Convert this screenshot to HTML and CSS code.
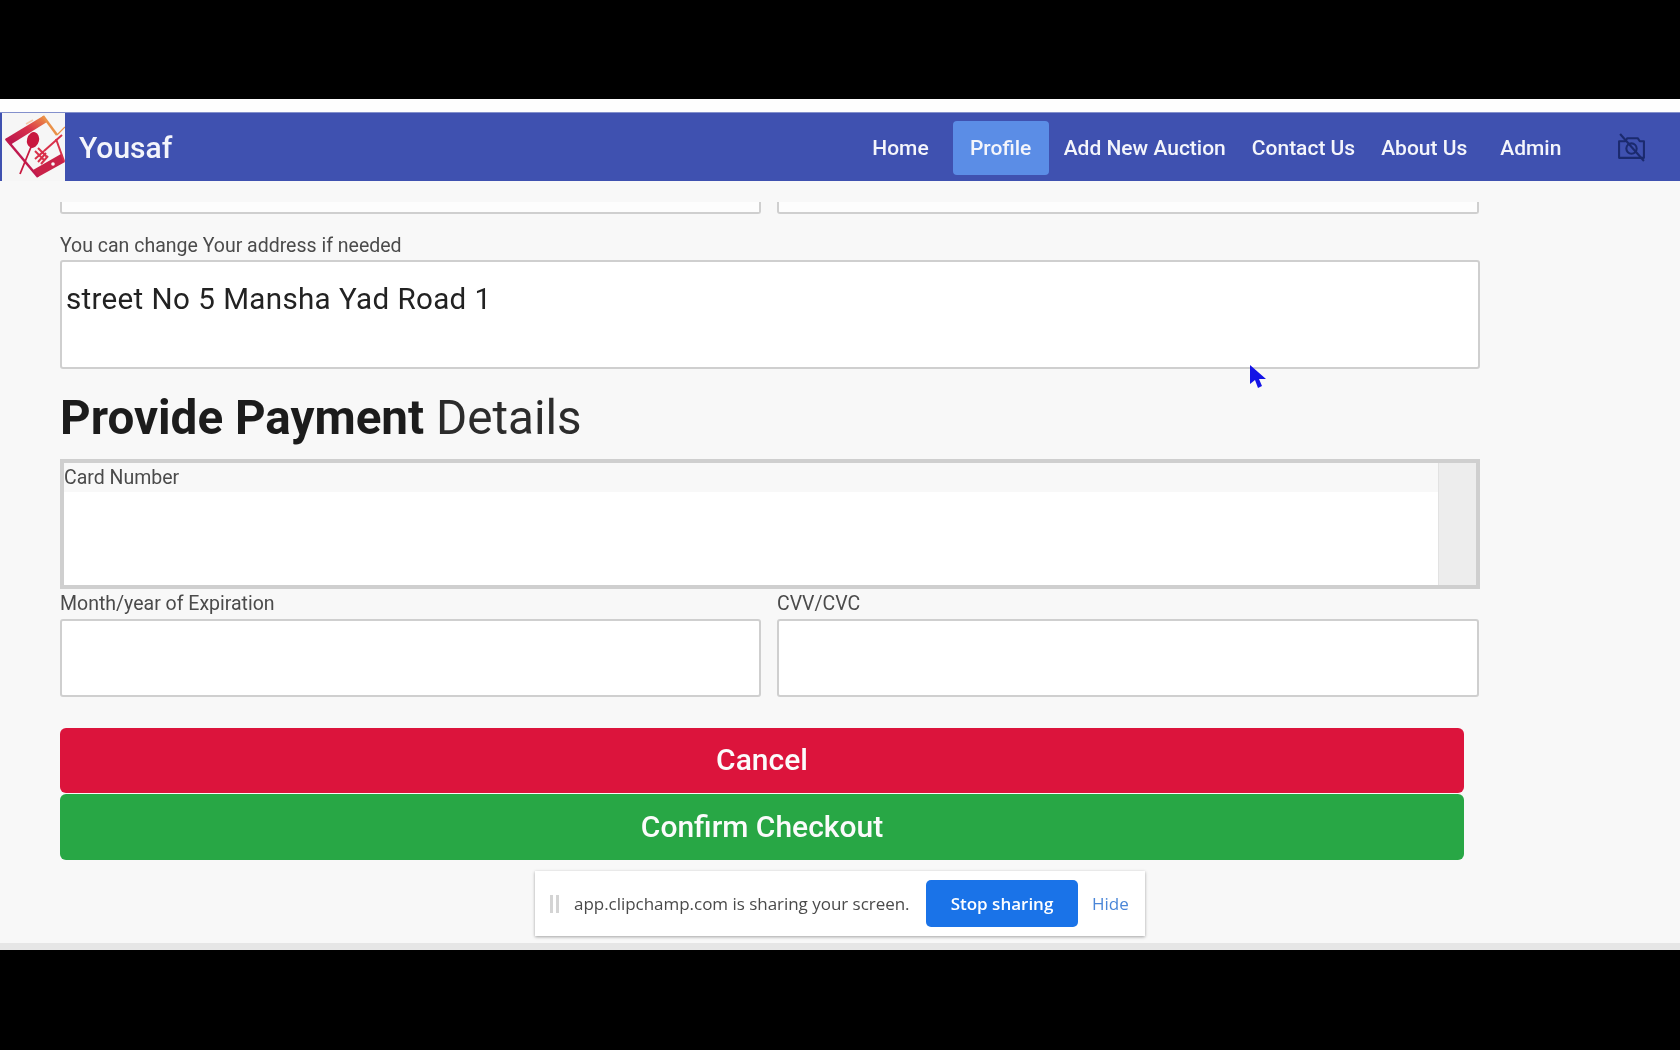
FILE: index.html
```html
<!DOCTYPE html>
<html lang="en">
<head>
<meta charset="utf-8">
<title>Checkout</title>
<link rel="stylesheet" href="styles.css">
</head>
<body>
<div class="screen">
  <div class="letterbox-top"></div>
  <div class="white-strip"></div>
  <header class="navbar">
    <div class="logo">
      <svg viewBox="0 0 63 68" width="63" height="68">
        <defs>
          <linearGradient id="lg" x1="0" y1="1" x2="1" y2="0">
            <stop offset="0" stop-color="#b5124e"/>
            <stop offset="0.55" stop-color="#d8304a"/>
            <stop offset="1" stop-color="#ee9a45"/>
          </linearGradient>
        </defs>
        <path fill="url(#lg)" d="M3 26 L41 3 L45 9 L8 32 Z"/>
        <path fill="#c92148" d="M36 64 L63 49 L59 41 L31 57 Z"/>
        <path fill="none" stroke="#c0194f" stroke-width="2.5" d="M4 26 L36 64"/>
        <path fill="none" stroke="#ea9148" stroke-width="2.5" d="M41 3 L55 22"/>
        <path fill="none" stroke="#ea9148" stroke-width="1.2" d="M55 22 L63 14"/>
        <path fill="none" stroke="#d8304a" stroke-width="2" d="M54 26 L62 48"/>
        <ellipse cx="31" cy="27" rx="6" ry="8" fill="#c8183f" transform="rotate(15 31 27)"/>
        <path fill="none" stroke="#c8183f" stroke-width="1.8" d="M29 34 L18 61"/>
        <path fill="none" stroke="#d8304a" stroke-width="2" d="M60 22 L42 38"/>
        <path fill="none" stroke="#d8304a" stroke-width="2" d="M33 38 L42 47 M36 35 L45 44 M42 38 L33 46 M44 40 L36 49 M46 43 L39 51"/>
        <circle cx="51" cy="51" r="1.8" fill="#f8f8f8"/>
        <path stroke="#f6c9a8" stroke-width="1.5" d="M24 11 L31 7"/>
      </svg>
    </div>
    <div class="brand">Yousaf</div>
    <nav class="nav-links">
      <a class="nav-link nav-home">Home</a>
      <a class="nav-link nav-active">Profile</a>
      <a class="nav-link nav-add">Add New Auction</a>
      <a class="nav-link nav-contact">Contact Us</a>
      <a class="nav-link nav-about">About Us</a>
      <a class="nav-link nav-admin">Admin</a>
    </nav>
    <svg class="cam" viewBox="0 0 28 28" width="29" height="29" fill="none" stroke="#1b2a6e" stroke-width="2">
      <path d="M2 8 H8 L10 5 H20 L22 8 H26 V24 H2 Z" stroke-linejoin="round"/>
      <circle cx="14" cy="15" r="5"/>
      <path d="M3 1 L26 27"/>
    </svg>
  </header>
  <main class="content">
    <div class="row clipped-row">
      <div class="clipped"></div>
      <div class="clipped"></div>
    </div>
    <label class="label label-address">You can change Your address if needed</label>
    <div class="address">street No 5 Mansha Yad Road 1</div>
    <h2 class="heading"><b>Provide Payment</b> Details</h2>
    <div class="card-frame">
      <div class="card-body">
        <div class="card-label">Card Number</div>
      </div>
      <div class="card-scroll"></div>
    </div>
    <div class="row labels-row">
      <label class="label">Month/year of Expiration</label>
      <label class="label">CVV/CVC</label>
    </div>
    <div class="row">
      <div class="input"></div>
      <div class="input"></div>
    </div>
    <button class="btn btn-cancel">Cancel</button>
    <button class="btn btn-confirm">Confirm Checkout</button>
  </main>
  <div class="bottom-strip"></div>
  <div class="letterbox-bottom"></div>

  <div class="share-bar">
    <span class="grip"></span>
    <span class="share-text">app.clipchamp.com is sharing your screen.</span>
    <span class="stop">Stop sharing</span>
    <span class="hide">Hide</span>
  </div>
  <svg class="cursor" viewBox="0 0 18 26" width="18" height="26">
    <path d="M1 1 L1 20 L6 16 L9 24 L13 22 L10 15 L17 15 Z" fill="#1414e6"/>
  </svg>
</div>
</body>
</html>
```
FILE: styles.css
```css
* { box-sizing: border-box; }
html, body { margin: 0; padding: 0; background: #000; }
body { font-family: Roboto, "Liberation Sans", sans-serif; }

.screen {
  position: relative;
  width: 1680px;
  height: 1050px;
  overflow: hidden;
  display: flex;
  flex-direction: column;
  background: #000;
  filter: blur(0.6px);
}

.letterbox-top { height: 99px; background: #000; flex: none; }
.white-strip { height: 13px; background: #fefefe; flex: none; }

.navbar {
  flex: none;
  height: 69px;
  background: #3f51b0;
  display: flex;
  align-items: center;
  padding-left: 2px;
  box-shadow: inset 0 1px 0 #8390cc;
}
.logo {
  width: 63px;
  height: 68px;
  background: #f6f6f6;
  flex: none;
}
.logo svg { display: block; }
.brand {
  margin-left: 14px;
  margin-top: 1px;
  color: #f4f5fb;
  font-size: 30px;
  font-weight: 500;
}
.nav-links {
  display: flex;
  align-items: center;
  margin-left: 700px;
  margin-top: 2px;
}
.nav-link {
  color: #f4f5fb;
  font-size: 21px;
  font-weight: 500;
  display: block;
}
.nav-active {
  background: #5b8de6;
  border-radius: 4px;
  height: 54px;
  line-height: 54px;
  width: 96px;
  text-align: center;
  margin-left: 24px;
}
.nav-add { margin-left: 15px; }
.nav-contact { margin-left: 26px; }
.nav-about { margin-left: 26px; }
.nav-admin { margin-left: 33px; }
.cam { margin-left: 56px; margin-top: 2px; flex: none; }

.content {
  flex: 1;
  background: #f8f8f8;
  padding: 0 0 0 60px;
  display: flex;
  flex-direction: column;
  align-items: flex-start;
  min-height: 0;
}
.row { display: flex; gap: 16px; }
.clipped-row { margin-top: 21px; height: 12px; }
.clipped {
  width: 701px;
  height: 12px;
  background: #fdfdfd;
  border: 2px solid #cfcfcf;
  border-top: 0;
  border-radius: 0 0 3px 3px;
}
.clipped + .clipped { width: 702px; }

.label {
  color: #4b4b4b;
  font-size: 19.5px;
  line-height: 24px;
  display: block;
}
.label-address { margin-top: 20px; }

.address {
  margin-top: 2px;
  width: 1420px;
  height: 109px;
  background: #fff;
  border: 2px solid #cfcfcf;
  border-radius: 3px;
  color: #222;
  font-size: 29.6px;
  letter-spacing: 0.3px;
  word-spacing: 0.4px;
  line-height: 34px;
  padding: 20px 4px;
}
.heading {
  margin: 20px 0 0;
  height: 58px;
  font-size: 47.6px;
  line-height: 58px;
  font-weight: 400;
  color: #2c2c2c;
}
.heading b { font-weight: 700; color: #1c1c1c; }

.card-frame {
  margin-top: 12px;
  width: 1420px;
  height: 130px;
  border: 4px solid #cfcfcf;
  display: flex;
  background: #fff;
}
.card-body { flex: 1; }
.card-label {
  height: 29px;
  background: #f8f8f8;
  color: #4b4b4b;
  font-size: 19.5px;
  line-height: 30px;
}
.card-scroll {
  width: 38px;
  background: #ededed;
  border-left: 1px solid #e2e2e2;
}

.labels-row { margin-top: 1px; }
.labels-row .label { width: 701px; height: 29px; line-height: 28px; }
.input {
  width: 701px;
  height: 78px;
  background: #fff;
  border: 2px solid #cfcfcf;
  border-radius: 3px;
}
.input + .input { width: 702px; }

.btn {
  display: block;
  width: 1404px;
  border: 0;
  border-radius: 6px;
  color: #fbfbfb;
  font-family: inherit;
  font-size: 30px;
  font-weight: 500;
  text-align: center;
  padding: 0 0 2px;
}
.btn-cancel { margin-top: 31px; height: 65px; background: #dc143c; }
.btn-confirm { margin-top: 1px; height: 66px; background: #28a745; }

.bottom-strip { height: 7px; background: #e6e6e6; flex: none; }
.letterbox-bottom { height: 100px; background: #000; flex: none; }

.share-bar {
  position: absolute;
  left: 535px;
  top: 871px;
  width: 610px;
  height: 65px;
  background: #fff;
  box-shadow: 0 1px 3px rgba(0,0,0,.35);
  display: flex;
  align-items: center;
  font-family: "Open Sans", Roboto, sans-serif;
}
.grip {
  margin-left: 15px;
  width: 9px;
  height: 18px;
  border-left: 3px solid #d4d4d4;
  border-right: 3px solid #d4d4d4;
  flex: none;
}
.share-text {
  margin-left: 15px;
  width: 335px;
  font-size: 17px;
  letter-spacing: -0.03px;
  color: #4a4a4a;
  white-space: nowrap;
}
.stop {
  margin-left: 17px;
  width: 152px;
  height: 47px;
  line-height: 47px;
  background: #1a73e8;
  border-radius: 5px;
  color: #fff;
  text-align: center;
  font-size: 17px;
  font-weight: 600;
  flex: none;
}
.hide {
  margin-left: 14px;
  color: #4a86d8;
  font-size: 17px;
}
.cursor { position: absolute; left: 1249px; top: 364px; }
```
